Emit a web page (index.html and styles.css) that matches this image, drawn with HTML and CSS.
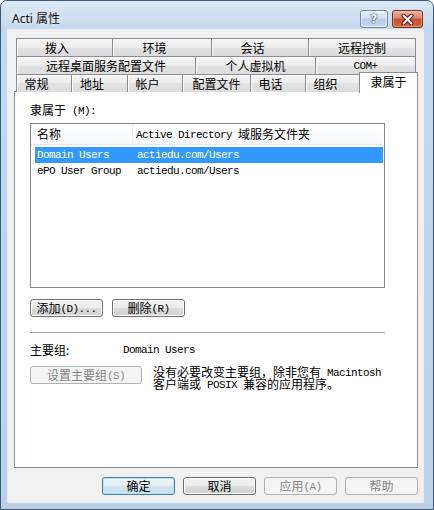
FILE: index.html
```html
<!doctype html>
<html>
<head>
    <meta charset="utf-8">
    <title>Acti 属性</title>
    <link rel="stylesheet" href="styles.css">
</head>
<body>

<div class="window">

    <div class="titlebar">
        <span class="caption">Acti 属性</span>
        <div class="caption-buttons">
            <div class="cap-btn help"><span>?</span></div>
            <div class="cap-btn close">
                <svg width="13" height="11" viewBox="0 0 13 11">
                    <path d="M2.5 1.5 L10.5 9.5 M10.5 1.5 L2.5 9.5" stroke="#5a1a0e" stroke-width="4" stroke-linecap="round"/>
                    <path d="M2.5 1.5 L10.5 9.5 M10.5 1.5 L2.5 9.5" stroke="#fff" stroke-width="2" stroke-linecap="round"/>
                </svg>
            </div>
        </div>
    </div>

    <div class="client">

        <!-- drei reihen reiter -->
        <div class="tabs">
            <div class="tabrow row-1">
                <div class="tab sm">拨入</div>
                <div class="tab sm">环境</div>
                <div class="tab sm">会话</div>
                <div class="tab">远程控制</div>
            </div>
            <div class="tabrow row-2">
                <div class="tab">远程桌面服务配置文件</div>
                <div class="tab">个人虚拟机</div>
                <div class="tab"><span class="en up">COM+</span></div>
            </div>
            <div class="tabrow row-3">
                <div class="tab sm">常规</div>
                <div class="tab sm">地址</div>
                <div class="tab sm">帐户</div>
                <div class="tab">配置文件</div>
                <div class="tab sm">电话</div>
                <div class="tab sm">组织</div>
                <div class="tab active">隶属于</div>
            </div>
        </div>

        <div class="panel">
            <div class="label">隶属于<span class="en"> (M):</span></div>

            <div class="listbox">
                <div class="lv-head">
                    <div class="col-name">名称</div>
                    <div class="col-path"><span class="en">Active Directory </span>域服务文件夹</div>
                </div>
                <div class="lv-rows">
                    <div class="lv-row selected">
                        <span class="col-name en">Domain Users</span>
                        <span class="en">actiedu.com/Users</span>
                    </div>
                    <div class="lv-row">
                        <span class="col-name en">ePO User Group</span>
                        <span class="en">actiedu.com/Users</span>
                    </div>
                </div>
            </div>

            <div class="btn-row">
                <div class="btn small">添加<span class="en">(D)...</span></div>
                <div class="btn small">删除<span class="en">(R)</span></div>
            </div>

            <div class="separator"></div>

            <div class="primary">
                <div class="primary-label">主要组:</div>
                <div class="en">Domain Users</div>
            </div>

            <div class="primary-set">
                <div class="btn wide disabled">设置主要组<span class="en">(S)</span></div>
                <div class="note">
                    <div class="note-line">没有必要改变主要组，除非您有<span class="en"> Macintosh</span></div>
                    <div class="note-line">客户端或<span class="en"> POSIX </span>兼容的应用程序。</div>
                </div>
            </div>
        </div>

        <div class="footer">
            <div class="btn default">确定</div>
            <div class="btn">取消</div>
            <div class="btn disabled">应用<span class="en">(A)</span></div>
            <div class="btn disabled">帮助</div>
        </div>

    </div>
</div>

</body>
</html>
```

FILE: styles.css
```css
* {
    box-sizing: border-box;
}

body {
    margin: 0;
    background: #fff;
    color: #000;
    font-family: "Noto Sans CJK SC", sans-serif;
    font-size: 12px;
}

.en {
    font-family: "Liberation Mono", monospace;
    font-size: 11px;
    letter-spacing: -0.6px;
    vertical-align: 1px;
}

.en.up {
    vertical-align: 2px;
}

/* fensterrahmen */
.window {
    width: 434px;
    height: 510px;
    display: flex;
    flex-direction: column;
    border: 1px solid #3d5878;
    border-radius: 7px 7px 0 0;
    background: linear-gradient(#dce9f6, #c4d8ed 28px, #bcd1e9);
    padding: 0 10px 7px 7px;
}

.titlebar {
    flex-shrink: 0;
    height: 29px;
    display: flex;
    justify-content: space-between;
    align-items: flex-start;
}

.caption {
    margin: 10px 0 0 4px;
    font-family: "Noto Sans", "Noto Sans CJK SC", sans-serif;
    font-size: 12px;
    line-height: 16px;
    color: #111;
    text-shadow: 0 0 6px #fff;
}

.caption-buttons {
    display: flex;
    gap: 4px;
    margin: 9px 0 0;
}

.cap-btn {
    height: 18px;
    border-radius: 3px;
    display: flex;
    align-items: center;
    justify-content: center;
}

.help {
    width: 28px;
    border: 1px solid #7189a8;
    background: linear-gradient(#eaf1f9, #d0deee 45%, #b9cce4 50%, #c9daee);
    box-shadow: inset 0 0 0 1px rgba(255, 255, 255, 0.5);
}

.help span {
    font-family: "DejaVu Sans", sans-serif;
    font-weight: bold;
    font-size: 12px;
    line-height: 12px;
    color: #fff;
    text-shadow: 0 0 1px #34506f, 0 0 1px #34506f, 0 0 2px #34506f;
}

.close {
    width: 31px;
    border: 1px solid #74301f;
    background: linear-gradient(#eab2a3, #d9826b 45%, #c94f33 50%, #d4663f);
    box-shadow: inset 0 0 0 1px rgba(255, 220, 210, 0.4);
}

.client {
    flex: 1;
    min-height: 0;
    background: #f0f0f0;
    box-shadow: 0 0 0 1px rgba(255, 255, 255, 0.6);
    padding: 8px 5px 0 6px;
}

/* reiter */
.tabs {
    margin: 0 2px;
}

.tabrow {
    display: grid;
    height: 18px;
}

.row-1 {
    grid-template-columns: 97px 99px 97px 107px;
}

.row-2 {
    grid-template-columns: 180px 120px 100px;
}

.row-3 {
    height: 17px;
    grid-template-columns: 56px 56px 55px 68px 55px 55px 55px;
}

.tab {
    border-top: 1px solid #898c95;
    border-right: 1px solid #898c95;
    background: linear-gradient(#f5f5f5, #ebebeb 50%, #e1e1e1 50%, #dcdcdc);
    box-shadow: inset 1px 1px 0 #fbfbfb;
    text-align: center;
    line-height: 17px;
    white-space: nowrap;
}

.tab:first-child {
    border-left: 1px solid #898c95;
}

.tab.sm {
    padding-right: 15px;
}

.tab.active {
    position: relative;
    z-index: 1;
    margin: -2px -2px -1px -2px;
    border-left: 1px solid #898c95;
    background: #fff;
    box-shadow: none;
    line-height: 18px;
}

.panel {
    height: 377px;
    border: 1px solid #898c95;
    background: #fff;
    padding: 0 32px 0 15px;
}

.label {
    margin-top: 11px;
    line-height: 14px;
}

/* liste */
.listbox {
    margin-top: 5px;
    height: 165px;
    border: 1px solid #828790;
    background: #fff;
}

.lv-head {
    display: flex;
    height: 21px;
    margin-right: 1px;
    background: linear-gradient(#fff, #f7f8fa);
    border-bottom: 1px solid #e3e5ea;
    line-height: 20px;
}

.lv-head .col-name {
    width: 102px;
    padding-left: 6px;
    border-right: 1px solid #eceef2;
}

.lv-head .col-path {
    flex: 1;
    padding-left: 3px;
}

.lv-rows {
    padding: 2px 1px 0 4px;
}

.lv-row {
    display: flex;
    height: 16px;
    line-height: 16px;
    padding-left: 2px;
}

.lv-row .col-name {
    width: 100px;
}

.lv-row.selected {
    background: #3399ff;
    color: #fff;
}

/* knoepfe */
.btn {
    width: 73px;
    height: 18px;
    border: 1px solid #707070;
    border-radius: 3px;
    background: linear-gradient(#f2f2f2, #ebebeb 50%, #dddddd 50%, #cfcfcf);
    box-shadow: inset 0 0 0 1px #fcfcfc;
    text-align: center;
    line-height: 16px;
    white-space: nowrap;
}

.btn.default {
    border-color: #3c7fb1;
    background: linear-gradient(#eef5fa, #e2edf5 50%, #d3e4f0 50%, #c8dceb);
    box-shadow: inset 0 0 0 1px #bfe3f7;
}

.btn.disabled {
    border-color: #adb2b5;
    background: #f4f4f4;
    box-shadow: none;
    color: #838383;
}

.btn-row {
    display: flex;
    gap: 9px;
    margin-top: 11px;
}

.separator {
    margin-top: 15px;
    height: 1px;
    background: #a0a0a0;
}

.primary {
    display: flex;
    margin-top: 10px;
    line-height: 14px;
}

.primary-label {
    width: 93px;
}

.primary-set {
    display: flex;
    margin-top: 9px;
}

.btn.wide {
    width: 112px;
}

.note {
    margin: 0 0 0 11px;
}

.note-line {
    height: 12px;
    line-height: 12px;
    white-space: nowrap;
}

.footer {
    display: flex;
    justify-content: flex-end;
    gap: 8px;
    margin-top: 9px;
}
```
